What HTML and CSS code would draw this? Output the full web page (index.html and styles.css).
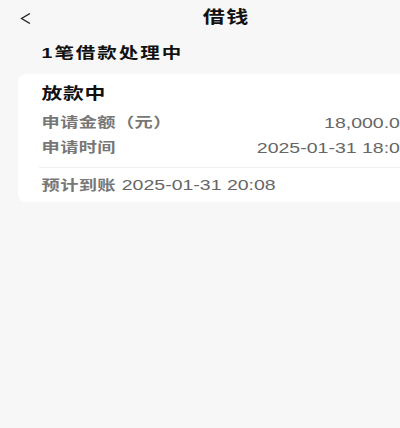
FILE: index.html
```html
<!DOCTYPE html>
<html lang="zh-CN">
<head>
<meta charset="utf-8">
<title>借钱</title>
<link rel="stylesheet" href="styles.css">
</head>
<body>
<div class="stage">
  <header class="nav">
    <span class="back"><svg width="9" height="13" viewBox="0 0 9 13"><polyline points="8,1.5 1.5,6.5 8,11.5" fill="none" stroke="#222" stroke-width="1.1"/></svg></span>
    <h1 class="title">借钱</h1>
    <span></span>
  </header>
  <div class="summary">1笔借款处理中</div>
  <section class="card">
    <div class="status">放款中</div>
    <div class="row"><span class="label">申请金额（元）</span><span class="value">18,000.00</span></div>
    <div class="row"><span class="label">申请时间</span><span class="value">2025-01-31 18:08</span></div>
    <div class="divider"></div>
    <div class="arrive"><span class="label">预计到账</span> <span class="value">2025-01-31 20:08</span></div>
  </section>
</div>
</body>
</html>
```

FILE: styles.css
```css
html, body {
  margin: 0;
  padding: 0;
  background: #f7f7f7;
  overflow: hidden;
}
body {
  width: 400px;
  height: 428px;
  font-family: "Liberation Sans", "Noto Sans CJK SC", sans-serif;
}
.stage {
  width: 348px;
  transform: scaleX(1.3);
  transform-origin: 0 0;
}
.nav {
  display: grid;
  grid-template-columns: 1fr auto 1fr;
  align-items: center;
  height: 36px;
  padding: 0 15px;
}
.back {
  display: flex;
  align-items: center;
}
.title {
  margin: 0;
  font-size: 17px;
  font-weight: 700;
  color: #111;
  line-height: 36px;
  letter-spacing: 1px;
}
.summary {
  margin: 7px 0 0 32px;
  font-size: 15px;
  font-weight: 700;
  line-height: 20px;
  letter-spacing: 1.5px;
  color: #111;
}
.card {
  margin: 11px 14px 0;
  background: #fff;
  border-radius: 6px;
  padding: 10px 18px 7px;
}
.status {
  font-size: 16px;
  font-weight: 700;
  line-height: 20px;
  color: #111;
  letter-spacing: 0.5px;
  margin-bottom: 6px;
}
.row {
  display: flex;
  justify-content: space-between;
  line-height: 25px;
}
.label {
  font-size: 14px;
  font-weight: 700;
  color: #777;
  letter-spacing: 0.3px;
}
.value {
  font-size: 15px;
  color: #666;
  font-weight: 400;
}
.divider {
  height: 1px;
  background: #efefef;
  margin: 7px -2px 0;
}
.arrive {
  padding-top: 7px;
  line-height: 20px;
  white-space: nowrap;
}
```
